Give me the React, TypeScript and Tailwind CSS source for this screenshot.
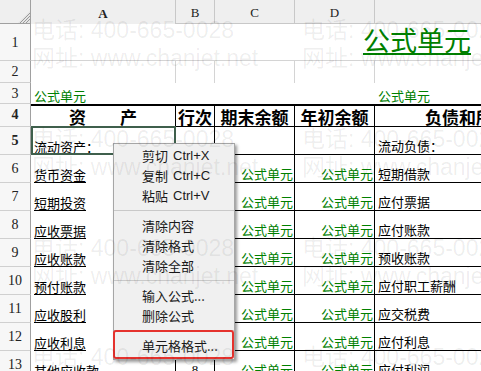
const cjk = "font-['Noto_Sans_CJK_SC',sans-serif]";
const num = "font-['Liberation_Serif','Noto_Sans_CJK_SC',serif]";

const left = ['货币资金', '短期投资', '应收票据', '应收账款', '预付账款', '应收股利', '应收利息', '其他应收款'];
const right = ['短期借款', '应付票据', '应付账款', '预收账款', '应付职工薪酬', '应交税费', '应付利息', '应付利润'];

const marks = [
  'left-[32px] top-[16px]',
  'left-[302px] top-[16px]',
  'left-[32px] top-[125px]',
  'left-[302px] top-[125px]',
  'left-[32px] top-[234px]',
  'left-[302px] top-[234px]',
  'left-[32px] top-[343px]',
  'left-[302px] top-[343px]',
];

function RowHead({ n, bold }: { n: number; bold?: boolean }) {
  return (
    <div
      className={`w-[31px] shrink-0 flex items-center justify-center border-r border-b border-r-[#a0a0a0] border-b-[#d0d0d0] bg-[#f7f7f7] text-[14px] text-[#222] ${num} ${bold ? 'font-bold' : ''}`}
    >
      {n}
    </div>
  );
}

function Green({ children }: { children: React.ReactNode }) {
  return <span className="text-[#008000] leading-none">{children}</span>;
}

function MenuItem({ label, keys }: { label: string; keys?: string }) {
  return (
    <div className="h-[20px] flex items-center pl-[28px] gap-[5px] text-[13px] text-[#1a1a1a] leading-none">
      <span className={cjk}>{label}</span>
      {keys && <span className="font-['Liberation_Sans',sans-serif]">{keys}</span>}
    </div>
  );
}

function Sep() {
  return (
    <div className="h-[10px] flex items-center">
      <div className="h-px w-full bg-[#c9c9c9]" />
    </div>
  );
}

export default function App() {
  return (
    <div className={`relative w-[481px] h-[371px] overflow-hidden bg-white ${cjk}`}>
      {/* column header */}
      <div className="flex h-[24px] bg-[#efefef] text-[13px] text-[#222]">
        <div className="w-[31px] shrink-0 relative border-r border-b border-[#a0a0a0]">
          <svg className="absolute right-0 bottom-0" width="12" height="12" viewBox="0 0 12 12">
            <path d="M12 0 L12 12 L0 12 Z" fill="#e4e4e4" />
            <path d="M12 2 L2 12 M12 5 L5 12 M12 8 L8 12" stroke="#9a9a9a" strokeWidth="1" />
          </svg>
        </div>
        <div className={`w-[145px] shrink-0 flex items-center justify-center pt-[3px] font-bold border-r border-[#c8c8c8] ${num}`}>A</div>
        <div className={`w-[39px] shrink-0 flex items-center justify-center pt-[3px] border-r border-b border-[#c8c8c8] ${num}`}>B</div>
        <div className={`w-[80px] shrink-0 flex items-center justify-center pt-[3px] border-r border-b border-[#c8c8c8] ${num}`}>C</div>
        <div className={`w-[80px] shrink-0 flex items-center justify-center pt-[3px] border-r border-b border-[#c8c8c8] ${num}`}>D</div>
        <div className="flex-1 border-b border-[#c8c8c8]" />
      </div>

      {/* row 1 */}
      <div className="flex h-[37px]">
        <RowHead n={1} />
        <div className="flex-1 border-b border-[#d4d4d4] pt-[2px] pl-[332px]">
          <span className="inline-block text-[27px] leading-none text-[#008000] border-b-2 border-[#008000]">公式单元</span>
        </div>
      </div>

      {/* row 2 */}
      <div className="flex h-[22px]">
        <RowHead n={2} />
        <div className="w-[145px] shrink-0 border-r border-[#d4d4d4]" />
        <div className="w-[39px] shrink-0 border-r border-[#d4d4d4]" />
        <div className="w-[80px] shrink-0 border-r border-[#d4d4d4]" />
        <div className="w-[80px] shrink-0 border-r border-[#d4d4d4]" />
        <div className="flex-1" />
      </div>

      {/* row 3 */}
      <div className="flex h-[21px] text-[13px]">
        <RowHead n={3} />
        <div className="w-[344px] shrink-0 flex items-end pb-[2px] pl-[3px]">
          <Green>公式单元</Green>
        </div>
        <div className="flex-1 flex items-end pb-[2px] pl-[3px]">
          <Green>公式单元</Green>
        </div>
      </div>

      {/* row 4 */}
      <div className="flex h-[23px] text-[17px] font-bold text-black leading-none">
        <RowHead n={4} />
        <div className="w-[145px] shrink-0 flex items-end justify-center pb-[1px] border-t-2 border-b border-r border-black whitespace-pre">资　　产</div>
        <div className="w-[39px] shrink-0 flex items-end justify-center pb-[1px] border-t-2 border-b border-r border-black">行次</div>
        <div className="w-[80px] shrink-0 flex items-end justify-center pb-[1px] border-t-2 border-b border-r border-black">期末余额</div>
        <div className="w-[80px] shrink-0 flex items-end justify-center pb-[1px] border-t-2 border-b border-r border-black">年初余额</div>
        <div className="flex-1 flex items-end pl-[50px] pb-[1px] border-t-2 border-b border-black whitespace-nowrap overflow-hidden">负债和所有者权益</div>
      </div>

      {/* row 5 */}
      <div className="flex h-[28px] text-[13px] text-black leading-none">
        <RowHead n={5} bold />
        <div className="relative w-[145px] shrink-0 flex items-end pl-[3px] pb-[2px] border-r border-black">
          <span>流动资产：</span>
          <div className="absolute -top-px left-0 right-[-1px] bottom-0 border-2 border-[#3f5f4c]" />
        </div>
        <div className="w-[39px] shrink-0 border-r border-b border-black" />
        <div className="w-[80px] shrink-0 border-r border-b border-black" />
        <div className="w-[80px] shrink-0 border-r border-b border-black" />
        <div className="flex-1 flex items-end pl-[3px] pb-[2px] border-b border-black">流动负债：</div>
      </div>

      {/* rows 6-13 */}
      {left.map((name, i) => (
        <div key={name} className="flex h-[28px] shrink-0 text-[13px] text-black leading-none">
          <RowHead n={i + 6} />
          <div className="w-[145px] shrink-0 flex items-end pl-[3px] border-r border-black">
            <span className="pb-px border-b border-black">{name}</span>
          </div>
          <div className={`w-[39px] shrink-0 flex items-end justify-center pb-[2px] border-r border-b border-black ${num}`}>{i + 1}</div>
          <div className="w-[80px] shrink-0 flex items-end justify-end pr-[1px] pb-[2px] border-r border-b border-black">
            <Green>公式单元</Green>
          </div>
          <div className="w-[80px] shrink-0 flex items-end justify-end pr-[1px] pb-[2px] border-r border-b border-black">
            <Green>公式单元</Green>
          </div>
          <div className="flex-1 flex items-end pl-[3px] pb-[2px] border-b border-black">{right[i]}</div>
        </div>
      ))}

      {/* context menu */}
      <div className="absolute left-[113px] top-[143px] w-[122px] pt-[1px] pb-[4px] bg-[#f0f0f0] border border-[#a6a6a6] shadow-[2px_2px_3px_rgba(0,0,0,0.4)]">
        <MenuItem label="剪切" keys="Ctrl+X" />
        <MenuItem label="复制" keys="Ctrl+C" />
        <MenuItem label="粘贴" keys="Ctrl+V" />
        <Sep />
        <MenuItem label="清除内容" />
        <MenuItem label="清除格式" />
        <MenuItem label="清除全部" />
        <Sep />
        <MenuItem label="输入公式..." />
        <MenuItem label="删除公式" />
        <Sep />
        <MenuItem label="单元格格式..." />
      </div>
      <div className="absolute left-[113px] top-[330px] w-[121px] h-[29px] border-2 border-[#e5322d] rounded-[3px]" />

      {/* watermark */}
      <div className="absolute inset-0 pointer-events-none">
        {marks.map((pos) => (
          <div
            key={pos}
            className={`absolute ${pos} whitespace-nowrap text-[23px] leading-[28px] text-black/[0.07] font-['Liberation_Sans','Noto_Sans_CJK_SC',sans-serif]`}
          >
            <div>电话: 400-665-0028</div>
            <div>网址: www.chanjet.net</div>
          </div>
        ))}
      </div>
    </div>
  );
}
